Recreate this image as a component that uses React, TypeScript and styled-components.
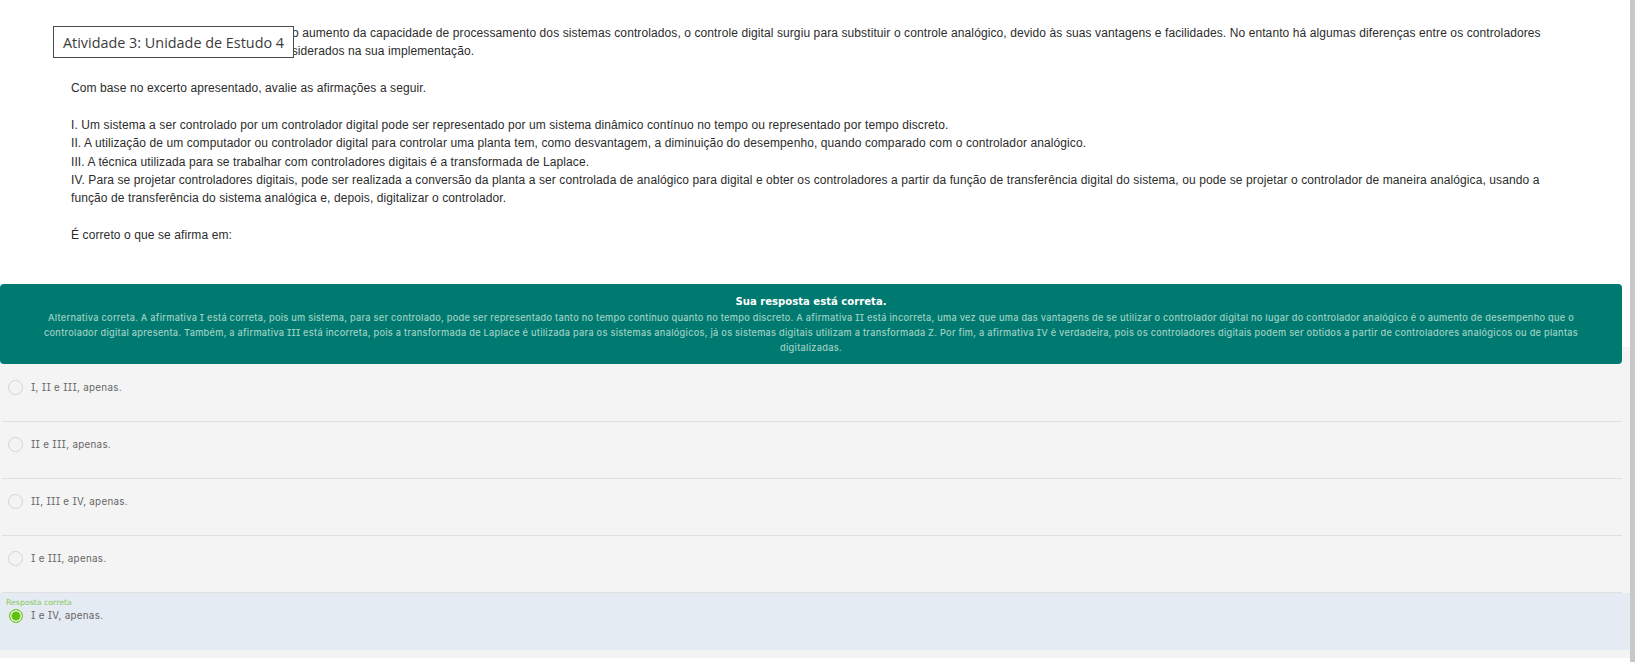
import styled, { createGlobalStyle } from 'styled-components'

const GlobalStyle = createGlobalStyle`
    html, body {
        margin: 0;
        padding: 0;
        background: #fff;
        overflow: hidden;
    }
`

const Page = styled.div`
    position: relative;
    display: flex;
    width: 1635px;
    height: 662px;
    overflow: hidden;
`

const Content = styled.main`
    width: 1630px;
    display: flex;
    flex-direction: column;
`

const Scrollbar = styled.div`
    width: 5px;
    flex-shrink: 0;
    background: #c8c8c8;
`

const Question = styled.section`
    height: 347px;
    flex-shrink: 0;
    box-sizing: border-box;
    padding: 24px 85px 0 71px;
    font-family: "Liberation Sans", Arial, sans-serif;
    font-size: 12px;
    line-height: 18.2px;
    letter-spacing: 0.1px;
    color: #2c2c2c;
`

const Paragraph = styled.p`
    margin: 0 0 18.8px;
`

const Line = styled.div``

// the start of these two lines sits under the title box
const CoveredLine = styled.div<{ $indent: number }>`
    padding-left: ${(p) => p.$indent}px;
`

const ActivityTitle = styled.div`
    position: absolute;
    left: 53px;
    top: 26px;
    width: 241px;
    height: 32px;
    box-sizing: border-box;
    padding-left: 9px;
    display: flex;
    align-items: center;
    white-space: nowrap;
    background: #fff;
    border: 1px solid #4a4a4a;
    font-family: "Open Sans", sans-serif;
    font-size: 14.4px;
    color: #3c3c3c;
`

const Answers = styled.section`
    height: 311px;
    background: #f4f4f4;
`

const Feedback = styled.div`
    width: 1622px;
    height: 80px;
    margin-top: -63px;
    box-sizing: border-box;
    padding-top: 10px;
    border-radius: 4px;
    background: #007a70;
    text-align: center;
    font-family: Inter, "DejaVu Sans", sans-serif;
    font-feature-settings: "cv08";
`

const FeedbackTitle = styled.div`
    font-family: "DejaVu Sans", sans-serif;
    font-size: 10.1px;
    line-height: 15px;
    font-weight: bold;
    color: #fff;
`

const FeedbackText = styled.div`
    padding: 1px 40px 0;
    font-size: 9.2px;
    font-weight: 500;
    line-height: 15px;
    letter-spacing: 0.28px;
    color: #9fd0c4;
`

const OptionList = styled.div`
    display: flex;
    flex-direction: column;
    padding-top: 1px;
`

const Option = styled.div<{ $selected?: boolean }>`
    position: relative;
    height: 57px;
    margin-right: ${(p) => (p.$selected ? '0' : '8px')};
    margin-left: ${(p) => (p.$selected ? '0' : '2px')};
    box-sizing: border-box;
    padding-top: ${(p) => (p.$selected ? '16px' : '15px')};
    padding-left: ${(p) => (p.$selected ? '9px' : '6px')};
    display: flex;
    align-items: flex-start;
    gap: 8px;
    background: ${(p) => (p.$selected ? '#e4ebf3' : 'transparent')};
    border-bottom: ${(p) => (p.$selected ? 'none' : '1px solid #e0e0e0')};
`

const Radio = styled.span<{ $selected?: boolean }>`
    width: ${(p) => (p.$selected ? '14px' : '15px')};
    height: ${(p) => (p.$selected ? '14px' : '15px')};
    flex-shrink: 0;
    box-sizing: border-box;
    border-radius: 50%;
    border: 1px solid ${(p) => (p.$selected ? '#6cc417' : '#d4d4d4')};
    background: ${(p) => (p.$selected ? '#5fc10c' : 'transparent')};
    box-shadow: ${(p) => (p.$selected ? 'inset 0 0 0 1.5px #f2f6f8' : 'none')};
`

const OptionText = styled.span<{ $selected?: boolean }>`
    margin-top: ${(p) => (p.$selected ? '-1px' : '0')};
    font-family: Inter, "DejaVu Sans", sans-serif;
    font-feature-settings: "cv08";
    font-size: 9.8px;
    line-height: 15px;
    letter-spacing: 0.3px;
    color: #666;
`

const CorrectLabel = styled.span`
    position: absolute;
    left: 6px;
    top: 5px;
    font-family: "DejaVu Sans", sans-serif;
    font-size: 7.8px;
    line-height: 9px;
    color: #86c95c;
`

const options = ['I, II e III, apenas.', 'II e III, apenas.', 'II, III e IV, apenas.', 'I e III, apenas.']

export default function App() {
    return (
        <Page>
            <GlobalStyle />
            <Content>
                <Question>
                    <Paragraph>
                        <CoveredLine $indent={221}>
                            o aumento da capacidade de processamento dos sistemas controlados, o controle digital surgiu para substituir o controle analógico, devido às suas vantagens e facilidades. No entanto há algumas diferenças entre os controladores
                        </CoveredLine>
                        <CoveredLine $indent={201}>considerados na sua implementação.</CoveredLine>
                    </Paragraph>
                    <Paragraph>Com base no excerto apresentado, avalie as afirmações a seguir.</Paragraph>
                    <Paragraph>
                        <Line>I. Um sistema a ser controlado por um controlador digital pode ser representado por um sistema dinâmico contínuo no tempo ou representado por tempo discreto.</Line>
                        <Line>II. A utilização de um computador ou controlador digital para controlar uma planta tem, como desvantagem, a diminuição do desempenho, quando comparado com o controlador analógico.</Line>
                        <Line>III. A técnica utilizada para se trabalhar com controladores digitais é a transformada de Laplace.</Line>
                        <Line>IV. Para se projetar controladores digitais, pode ser realizada a conversão da planta a ser controlada de analógico para digital e obter os controladores a partir da função de transferência digital do sistema, ou pode se projetar o controlador de maneira analógica, usando a função de transferência do sistema analógica e, depois, digitalizar o controlador.</Line>
                    </Paragraph>
                    <Paragraph>É correto o que se afirma em:</Paragraph>
                </Question>
                <Answers>
                    <Feedback>
                        <FeedbackTitle>Sua resposta está correta.</FeedbackTitle>
                        <FeedbackText>
                            Alternativa correta. A afirmativa I está correta, pois um sistema, para ser controlado, pode ser representado tanto no tempo contínuo quanto no tempo discreto. A afirmativa II está incorreta, uma vez que uma das vantagens de se utilizar o controlador digital no lugar do controlador analógico é o aumento de desempenho que o controlador digital apresenta. Também, a afirmativa III está incorreta, pois a transformada de Laplace é utilizada para os sistemas analógicos, já os sistemas digitais utilizam a transformada Z. Por fim, a afirmativa IV é verdadeira, pois os controladores digitais podem ser obtidos a partir de controladores analógicos ou de plantas digitalizadas.
                        </FeedbackText>
                    </Feedback>
                    <OptionList>
                        {options.map((o) => (
                            <Option key={o}>
                                <Radio />
                                <OptionText>{o}</OptionText>
                            </Option>
                        ))}
                        <Option $selected>
                            <CorrectLabel>Resposta correta</CorrectLabel>
                            <Radio $selected />
                            <OptionText $selected>I e IV, apenas.</OptionText>
                        </Option>
                    </OptionList>
                </Answers>
            </Content>
            <Scrollbar />
            <ActivityTitle>Atividade 3: Unidade de Estudo 4</ActivityTitle>
        </Page>
    )
}
